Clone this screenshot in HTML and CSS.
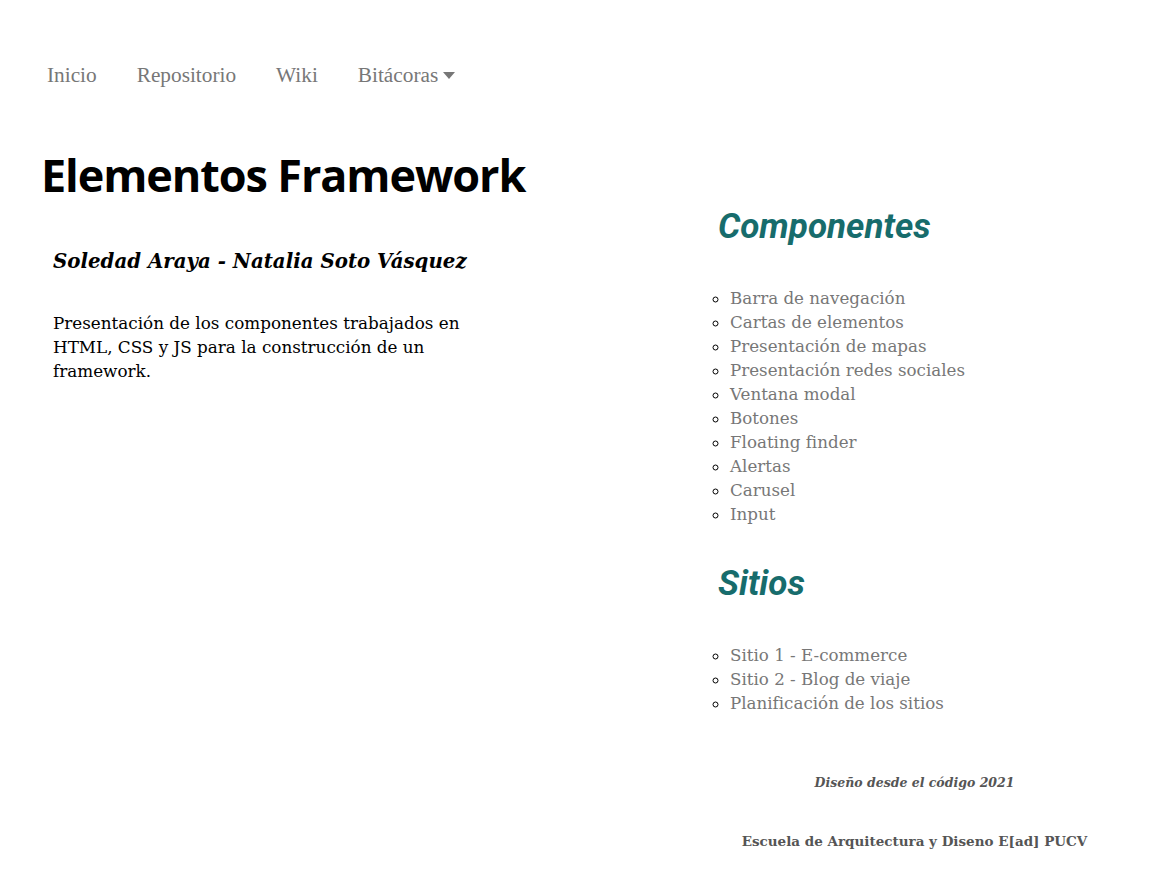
FILE: index.html
```html
<!DOCTYPE html>
<html lang="es">
<head>
<meta charset="utf-8">
<title>Elementos Framework</title>
<link rel="stylesheet" href="styles.css">
</head>
<body>
<nav class="nav">
  <ul class="nav-list">
    <li><a href="#">Inicio</a></li>
    <li><a href="#">Repositorio</a></li>
    <li><a href="#">Wiki</a></li>
    <li><a href="#" class="dropdown">Bitácoras <svg class="caret" width="12" height="8" viewBox="0 0 12 8"><path d="M0 0h12L6 7z" fill="#777"/></svg></a></li>
  </ul>
</nav>
<main class="page">
  <section class="left">
    <h1 class="title">Elementos Framework</h1>
    <h3 class="authors">Soledad Araya - Natalia Soto Vásquez</h3>
    <p class="intro">Presentación de los componentes trabajados en HTML, CSS y JS para la construcción de un framework.</p>
  </section>
  <aside class="right">
    <h2 class="section-title">Componentes</h2>
    <ul class="links">
      <li><a href="#">Barra de navegación</a></li>
      <li><a href="#">Cartas de elementos</a></li>
      <li><a href="#">Presentación de mapas</a></li>
      <li><a href="#">Presentación redes sociales</a></li>
      <li><a href="#">Ventana modal</a></li>
      <li><a href="#">Botones</a></li>
      <li><a href="#">Floating finder</a></li>
      <li><a href="#">Alertas</a></li>
      <li><a href="#">Carusel</a></li>
      <li><a href="#">Input</a></li>
    </ul>
    <h2 class="section-title sitios">Sitios</h2>
    <ul class="links">
      <li><a href="#">Sitio 1 - E-commerce</a></li>
      <li><a href="#">Sitio 2 - Blog de viaje</a></li>
      <li><a href="#">Planificación de los sitios</a></li>
    </ul>
    <footer class="footer">
      <p class="footer-year">Diseño desde el código 2021</p>
      <p class="footer-school">Escuela de Arquitectura y Diseno E[ad] PUCV</p>
    </footer>
  </aside>
</main>
</body>
</html>
```
FILE: styles.css
```css
* { box-sizing: border-box; }
body {
  margin: 0;
  background: #fff;
  font-family: "DejaVu Serif", serif;
  color: #000;
}
.nav {
  padding: 62px 0 0 27px;
}
.nav-list {
  list-style: none;
  margin: 0;
  padding: 0;
  display: flex;
}
.nav-list li a {
  display: flex;
  align-items: center;
  gap: 5px;
  padding: 0 20px;
  font-family: "Liberation Serif", serif;
  font-size: 21.3px;
  line-height: 26px;
  color: #777;
  text-decoration: none;
}
.caret { margin-top: 1px; }
.page {
  display: grid;
  grid-template-columns: 660px 1fr;
  padding: 0 29px 0 41px;
}
.title {
  margin: 59px 0 0;
  font-family: "Open Sans", sans-serif;
  font-weight: 700;
  font-size: 45px;
  line-height: 56px;
  letter-spacing: -1.1px;
}
.authors {
  margin: 44px 0 0 12px;
  font-style: italic;
  font-weight: 700;
  font-size: 19.8px;
  line-height: 28px;
}
.intro {
  margin: 36px 0 0 12px;
  max-width: 440px;
  font-size: 16.8px;
  line-height: 24px;
}
.right {
  padding-top: 118px;
}
.section-title {
  margin: 0 0 0 17px;
  font-family: Roboto, sans-serif;
  font-style: italic;
  font-weight: 700;
  font-size: 35px;
  line-height: 42px;
  color: #176c6c;
}
.sitios { margin-top: 37px; }
.links {
  margin: 38px 0 0;
  padding-left: 29px;
  list-style: circle;
  font-size: 16.7px;
  line-height: 24px;
}
.links a {
  color: #777;
  text-decoration: none;
}
.footer {
  text-align: center;
  color: #555;
  font-weight: 700;
}
.footer-year {
  margin: 60px 0 0;
  font-size: 12.5px;
  font-style: italic;
}
.footer-school {
  margin: 43px 0 0;
  font-size: 13.5px;
}
```
